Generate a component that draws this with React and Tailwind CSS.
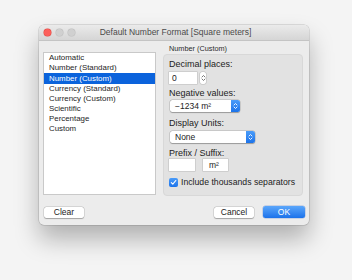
import React from "react";

const font = { fontFamily: '"Liberation Sans", Arial, sans-serif' };

function UpDown({ color = "white", w = 5, h = 8 }) {
  return (
    <svg width={w} height={h} viewBox="0 0 5 8" fill="none">
      <path d="M1 3 L2.5 1.5 L4 3" stroke={color} strokeWidth="0.9" strokeLinecap="round" strokeLinejoin="round" />
      <path d="M1 5 L2.5 6.5 L4 5" stroke={color} strokeWidth="0.9" strokeLinecap="round" strokeLinejoin="round" />
    </svg>
  );
}

function Select({ text, width }) {
  return (
    <div
      className="h-[12px] flex items-stretch rounded-[2.5px] bg-white shadow-[0_0_0_0.5px_rgba(0,0,0,0.18),0_0.5px_1px_rgba(0,0,0,0.25)] overflow-hidden"
      style={{ width }}
    >
      <div className="flex-1 flex items-center pl-[5px] text-[8.5px] text-[#222] leading-none">{text}</div>
      <div className="w-[9px] flex items-center justify-center bg-gradient-to-b from-[#4a9cf9] to-[#1b73ea]">
        <UpDown />
      </div>
    </div>
  );
}

export default function App() {
  const items = [
    "Automatic",
    "Number (Standard)",
    "Number (Custom)",
    "Currency (Standard)",
    "Currency (Custom)",
    "Scientific",
    "Percentage",
    "Custom",
  ];
  return (
    <div className="w-[352px] h-[280px] bg-[#f4f4f4] pt-[25px] pl-[39px] overflow-hidden" style={font}>
      <div className="w-[270px] h-[200px] rounded-[5px] bg-[#ececec] shadow-[0_0_0_0.5px_rgba(0,0,0,0.2),0_14px_24px_rgba(0,0,0,0.28)] flex flex-col overflow-hidden">
        {/* title bar */}
        <div className="h-[16px] shrink-0 flex items-center relative bg-gradient-to-b from-[#ebebeb] to-[#d5d5d5] border-b border-[#c4c4c4]">
          <div className="flex items-center gap-[5px] pl-[5px]">
            <div className="w-[7px] h-[7px] rounded-full bg-[#fc605c] shadow-[0_0_0_0.5px_#de4a44]" />
            <div className="w-[7px] h-[7px] rounded-full bg-[#d0d0d0] shadow-[0_0_0_0.5px_#bdbdbd]" />
            <div className="w-[7px] h-[7px] rounded-full bg-[#d0d0d0] shadow-[0_0_0_0.5px_#bdbdbd]" />
          </div>
          <div className="absolute inset-0 flex items-center justify-center text-[8.5px] text-[#4a4a4a] leading-none pl-[3px]">
            Default Number Format [Square meters]
          </div>
        </div>

        {/* content */}
        <div className="flex pl-[4px] gap-[7px]">
          <div className="mt-[11px] w-[113px] h-[143px] bg-white border border-[#c9c9c9]">
            {items.map((it, i) => (
              <div
                key={it}
                className={
                  "h-[10.2px] flex items-center pl-[5px] text-[7.9px] leading-none " +
                  (i === 2 ? "bg-[#0b63dc] text-white" : "text-[#1e1e1e]")
                }
              >
                {it}
              </div>
            ))}
          </div>

          <div className="pt-[3px] flex flex-col">
            <div className="h-[10px] flex items-center pl-[6px] text-[7.3px] text-[#2b2b2b] leading-none">
              Number (Custom)
            </div>
            <div className="w-[140px] h-[142px] rounded-[4px] bg-[#e2e2e2] border border-[#d8d8d8] pl-[5px] pt-[4px] flex flex-col text-[#222]">
              <div className="h-[10px] flex items-center text-[9px] leading-none">Decimal places:</div>
              <div className="mt-[3px] flex items-center gap-[3px]">
                <div className="w-[28px] h-[12px] bg-white shadow-[0_0_0_0.5px_#b9b9b9] flex items-center pl-[3px] text-[8.5px] leading-none">
                  0
                </div>
                <div className="w-[6px] h-[12px] rounded-[2px] bg-white shadow-[0_0_0_0.5px_#b9b9b9] flex items-center justify-center">
                  <UpDown color="#6a6a6a" w={5} h={8} />
                </div>
              </div>
              <div className="mt-[4px] h-[10px] flex items-center text-[9px] leading-none">Negative values:</div>
              <div className="mt-[2px] pl-[1px]">
                <Select text={<span>−1234 m²</span>} width={70} />
              </div>
              <div className="mt-[6px] h-[10px] flex items-center text-[9px] leading-none">Display Units:</div>
              <div className="mt-[3px] pl-[1px]">
                <Select text="None" width={85} />
              </div>
              <div className="mt-[5px] h-[10px] flex items-center text-[9px] leading-none">Prefix / Suffix:</div>
              <div className="mt-[1px] flex items-center gap-[8px]">
                <div className="w-[26px] h-[12px] bg-white shadow-[0_0_0_0.5px_#b9b9b9]" />
                <div className="w-[25px] h-[12px] bg-white shadow-[0_0_0_0.5px_#b9b9b9] flex items-center pl-[6px] text-[8.5px] leading-none">
                  m²
                </div>
              </div>
              <div className="mt-[6px] h-[10px] flex items-center gap-[3px]">
                <div className="w-[9px] h-[9px] rounded-[2px] bg-gradient-to-b from-[#4a9cf9] to-[#1b73ea] flex items-center justify-center">
                  <svg width="7" height="7" viewBox="0 0 7 7" fill="none">
                    <path d="M1.3 3.7 L2.8 5.2 L5.8 1.5" stroke="white" strokeWidth="1.1" strokeLinecap="round" strokeLinejoin="round" />
                  </svg>
                </div>
                <div className="text-[8.7px] leading-none">Include thousands separators</div>
              </div>
            </div>
          </div>
        </div>

        {/* buttons */}
        <div className="mt-[10px] flex items-center pl-[5px] pr-[4px]">
          <div className="w-[40px] h-[11px] rounded-[2.5px] bg-white shadow-[0_0_0_0.5px_rgba(0,0,0,0.15),0_0.5px_1px_rgba(0,0,0,0.25)] flex items-center justify-center text-[8.5px] text-[#222] leading-none">
            Clear
          </div>
          <div className="flex-1" />
          <div className="w-[40px] h-[11px] rounded-[2.5px] bg-white shadow-[0_0_0_0.5px_rgba(0,0,0,0.15),0_0.5px_1px_rgba(0,0,0,0.25)] flex items-center justify-center text-[8.5px] text-[#222] leading-none">
            Cancel
          </div>
          <div className="w-[9px]" />
          <div className="w-[42px] h-[12px] rounded-[2.5px] bg-gradient-to-b from-[#5aa6fb] to-[#1a72ea] shadow-[0_0_0_0.5px_rgba(0,60,180,0.3)] flex items-center justify-center text-[8.5px] text-white leading-none">
            OK
          </div>
        </div>
      </div>
    </div>
  );
}
